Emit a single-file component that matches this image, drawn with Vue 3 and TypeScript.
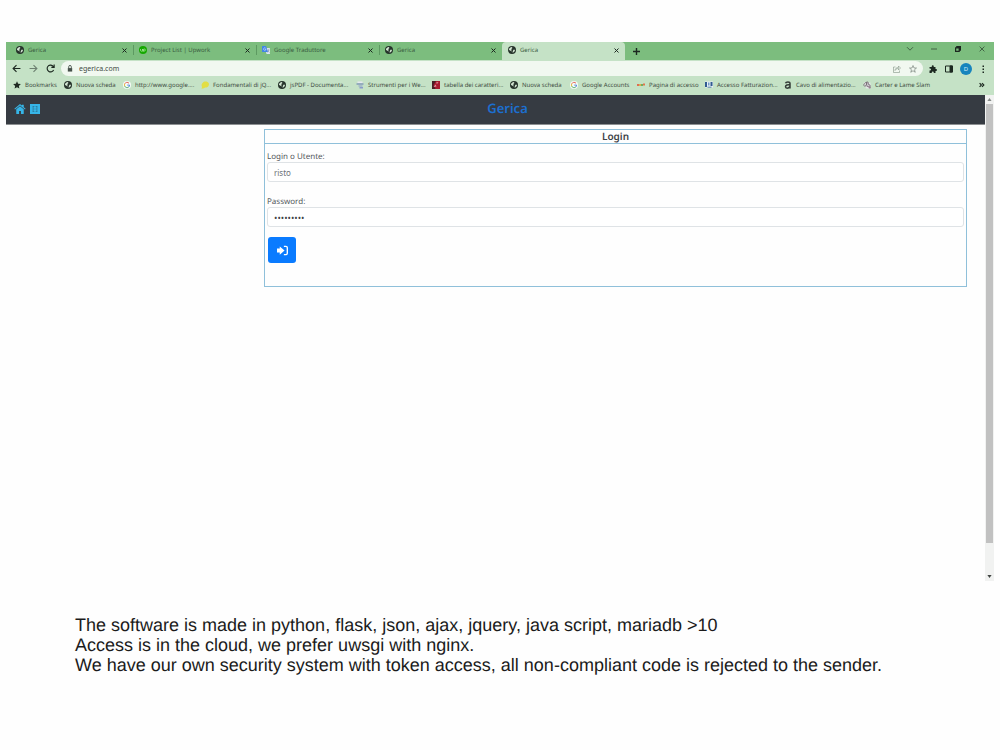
<script setup lang="ts">
import { ref } from 'vue'

interface Tab {
  title: string
  icon: string
  active?: boolean
}

interface Bookmark {
  title: string
  icon: string
}

const tabs: Tab[] = [
  { title: 'Gerica', icon: 'globe' },
  { title: 'Project List | Upwork', icon: 'upwork' },
  { title: 'Google Traduttore', icon: 'translate' },
  { title: 'Gerica', icon: 'globe' },
  { title: 'Gerica', icon: 'globe', active: true },
]

const bookmarks: Bookmark[] = [
  { title: 'Bookmarks', icon: 'star' },
  { title: 'Nuova scheda', icon: 'globe' },
  { title: 'http://www.google....', icon: 'google' },
  { title: 'Fondamentali di jQ...', icon: 'folder' },
  { title: 'jsPDF - Documenta...', icon: 'globe' },
  { title: 'Strumenti per i We...', icon: 'tools' },
  { title: 'tabella dei caratteri...', icon: 'table' },
  { title: 'Nuova scheda', icon: 'globe' },
  { title: 'Google Accounts', icon: 'google' },
  { title: 'Pagina di accesso', icon: 'dots' },
  { title: 'Accesso Fatturazion...', icon: 'invoice' },
  { title: 'Cavo di alimentazio...', icon: 'letter' },
  { title: 'Carter e Lame Slam', icon: 'parts' },
]

const address = ref('egerica.com')
const user = ref('risto')
const password = ref('gerica123')
</script>

<template>
  <svg class="sprite" aria-hidden="true">
    <symbol id="globe" viewBox="0 0 16 16">
      <circle cx="8" cy="8" r="8" fill="#26332b" />
      <path d="M2 6.500c1-2.500 3-4 5.500-4.300L9 4 7 5.500l.5 1.500-2 1L7.500 9.500 7 11 5 9.500 2.200 8zM10 8l2.500-1 1.500 1.500-1.500 3-3 2-.5-2 1.500-1.500z" fill="#d5e8d5" />
    </symbol>
    <symbol id="upwork" viewBox="0 0 16 16">
      <circle cx="8" cy="8" r="8" fill="#15a800" />
      <path d="M3 6v2.500a2 2 0 0 0 4 0V6c1 2.500 2 4 3.700 4a2 2 0 1 0-2-2L8 12" fill="none" stroke="#bdf0b4" stroke-width="1.300" />
    </symbol>
    <symbol id="translate" viewBox="0 0 16 16">
      <path d="M6 4h9a1 1 0 0 1 1 1v10a1 1 0 0 1-1 1H9z" fill="#dce5ee" />
      <path d="M1 0h7l4 12H1a1 1 0 0 1-1-1V1a1 1 0 0 1 1-1z" fill="#4285e8" />
      <path d="M7.500 4.500A2.500 2.500 0 1 0 8 7H6" fill="none" stroke="#dbe8fb" stroke-width="1.200" />
      <path d="M11 8h4M13 7v1c0 2-1 4-2 5M12 9c.5 2 1.500 3 3 4" fill="none" stroke="#7890a5" />
    </symbol>
    <symbol id="star" viewBox="0 0 16 16">
      <path d="M8 .5l2.300 5 5.400.6-4 3.700 1.100 5.400L8 12.500l-4.800 2.700 1.100-5.400-4-3.700 5.400-.6z" fill="#1f2a22" />
    </symbol>
    <symbol id="google" viewBox="0 0 16 16">
      <circle cx="8" cy="8" r="8" fill="#f5faf5" />
      <g fill="none" stroke-width="2">
        <path d="M12 4.500A5.200 5.200 0 0 0 3.500 5.500" stroke="#e46a5e" />
        <path d="M3.500 5.500a5.200 5.200 0 0 0 0 5" stroke="#e8bd42" />
        <path d="M3.500 10.500a5.200 5.200 0 0 0 8 1.500" stroke="#4aa866" />
        <path d="M11.500 12A5.200 5.200 0 0 0 13.200 8.200H8.500" stroke="#5689de" />
      </g>
    </symbol>
    <symbol id="folder" viewBox="0 0 16 16">
      <path d="M5 2c4-2 9-.5 10.500 2.500S15 12 11 13c-2 0-3 0-5 1.500L1 15.500 2 12C0 8 2 4 5 2z" fill="#e2de45" />
    </symbol>
    <symbol id="tools" viewBox="0 0 16 16">
      <path d="M3 1h10v3H3z" fill="#e6e8f0" />
      <path d="M1 5h14v2H1z" fill="#6579b5" />
      <path d="M5 9h8v2H5zM7 12h7v3H7z" fill="#8a9bc9" />
    </symbol>
    <symbol id="table" viewBox="0 0 16 16">
      <path d="M0 0h16v16H0z" fill="#a81c30" />
      <path d="M0 0h8L3 8l4 8H0z" fill="#4a2027" />
      <path d="M8 3l5-1-3 4zM3 12l4-5 2 4z" fill="#e29aa2" />
    </symbol>
    <symbol id="dots" viewBox="0 0 16 16">
      <path d="M0 6h4v4H0z" fill="#dc6e55" />
      <path d="M4 6h4v4H4z" fill="#ddb04c" />
      <path d="M8 6h4v4H8z" fill="#72ae60" />
      <path d="M12 5h4v4h-4z" fill="#e2744f" />
    </symbol>
    <symbol id="invoice" viewBox="0 0 16 16">
      <path d="M0 1h16v12H0z" fill="#e8eff5" />
      <path d="M0 2h4v10H0zM11 2h4v8h-4z" fill="#315b91" />
      <path d="M6 3h3v6H6z" fill="#6e9ac7" />
      <path d="M5 11h8v3H5z" fill="#83a4bd" />
    </symbol>
    <symbol id="letter" viewBox="0 0 16 16">
      <path d="M3 4.500C4 1 12 .5 12 5V15M12 7.500C7 7 3 8 3 11.500s6 4 9-.5" fill="none" stroke="#353c38" stroke-width="3" />
    </symbol>
    <symbol id="parts" viewBox="0 0 16 16">
      <path d="M1 3h14v12H6z" fill="#e3e6e6" />
      <path d="M1 8l4-5 3 2-4 6zM7 2h3l1 5 3 1v6l-3-4-3 1z" fill="none" stroke="#6a5967" stroke-width="1.500" />
      <path d="M10 11h5v4h-3z" fill="#987f91" />
    </symbol>
  </svg>

  <main class="slide">
    <section class="browser">
      <header class="tab-strip">
        <div v-for="(tab, i) in tabs" :key="i" class="tab" :class="{ active: tab.active }">
          <svg class="favicon"><use :href="'#' + tab.icon" /></svg>
          <span class="tab-title">{{ tab.title }}</span>
          <button class="plain close" type="button" aria-label="Close tab">
            <svg viewBox="0 0 10 10"><path d="M1 1l8 8M9 1L1 9" /></svg>
          </button>
        </div>
        <button class="plain new-tab" type="button" aria-label="New tab">
          <svg viewBox="0 0 10 10"><path d="M5 0v10M0 5h10" /></svg>
        </button>
        <div class="window-buttons">
          <button class="plain" type="button" aria-label="Search tabs">
            <svg viewBox="0 0 10 10"><path d="M0 2l5 5 5-5" /></svg>
          </button>
          <button class="plain" type="button" aria-label="Minimize">
            <svg viewBox="0 0 10 10"><path d="M0 5h10" /></svg>
          </button>
          <button class="plain bold" type="button" aria-label="Restore">
            <svg viewBox="0 0 10 10"><path d="M1 3h6v6H1zM3 3V1h6v6H7" /></svg>
          </button>
          <button class="plain" type="button" aria-label="Close window">
            <svg viewBox="0 0 10 10"><path d="M1 1l8 8M9 1L1 9" /></svg>
          </button>
        </div>
      </header>

      <nav class="toolbar" aria-label="Browser toolbar">
        <div class="history">
          <button class="plain nav-button" type="button" aria-label="Back">
            <svg viewBox="0 0 16 16"><path d="M15 8H2M8 2L2 8l6 6" /></svg>
          </button>
          <button class="plain nav-button forward" type="button" aria-label="Forward">
            <svg viewBox="0 0 16 16"><path d="M1 8h13M8 2l6 6-6 6" /></svg>
          </button>
          <button class="plain nav-button" type="button" aria-label="Reload">
            <svg viewBox="0 0 16 16"><path d="M13.500 10.500A6 6 0 1 1 12 3.500l2 2M14.500 1v5h-5" /></svg>
          </button>
        </div>
        <div class="address">
          <svg class="lock" viewBox="0 0 12 16">
            <path d="M1 7h10v8H1z" fill="#46504a" />
            <path d="M3 7V4a3 3 0 0 1 6 0v3" fill="none" stroke="#46504a" stroke-width="2" />
          </svg>
          <input v-model="address" type="text" aria-label="Address" />
          <button class="plain faded" type="button" aria-label="Share">
            <svg viewBox="0 0 16 16"><path d="M5 4H1v11h12v-4M4 11c0-4 3-6 7-6V2l4 4-4 4V7c-3 0-5 1-7 4z" /></svg>
          </button>
          <button class="plain outline" type="button" aria-label="Bookmark this page">
            <svg viewBox="0 0 16 16"><path d="M8 1l2 5h5l-4 3.500 1.500 5L8 11.500l-4.500 3 1.500-5L1 6h5z" /></svg>
          </button>
        </div>
        <div class="tools">
          <button class="plain" type="button" aria-label="Extensions">
            <svg viewBox="0 0 16 16"><path d="M1 4h4.500V2.500a2 2 0 0 1 4 0V4H13v4h1a2 2 0 0 1 0 4h-1v4H9.500v-1a2 2 0 0 0-4 0v1H1v-5h1a2 2 0 0 0 0-4H1z" fill="#1c2820" stroke="none" /></svg>
          </button>
          <button class="plain" type="button" aria-label="Side panel">
            <svg viewBox="0 0 16 16"><path d="M1 2h14v12H1z" /><path d="M10 2h5v12h-5z" fill="#1c2820" /></svg>
          </button>
          <button class="plain avatar" type="button" aria-label="Profile">D</button>
          <button class="plain" type="button" aria-label="Menu">
            <svg viewBox="0 0 16 16"><path d="M7 1h3v3H7zM7 7h3v3H7zM7 13h3v3H7z" fill="#1c2820" stroke="none" /></svg>
          </button>
        </div>
      </nav>

      <nav class="bookmarks" aria-label="Bookmarks">
        <a v-for="(mark, i) in bookmarks" :key="i" href="#">
          <svg class="favicon"><use :href="'#' + mark.icon" /></svg>
          <span>{{ mark.title }}</span>
        </a>
        <button class="plain more" type="button" aria-label="More bookmarks">
          <svg viewBox="0 0 10 10"><path d="M1 2l3 3-3 3M5 2l3 3-3 3" /></svg>
        </button>
      </nav>

      <div class="viewport">
        <div class="page">
          <header class="navbar">
            <div class="nav-icons">
              <a href="#" aria-label="Home">
                <svg class="home" viewBox="0 0 18 16">
                  <path d="M9 3.500l6 5V15a1 1 0 0 1-1 1h-3.500v-5h-3v5H4a1 1 0 0 1-1-1V8.500z" />
                  <path d="M9 0l3 2.500V1h3v4l3 2.500-1 1.300-8-6.500-8 6.500L0 7.500z" />
                </svg>
              </a>
              <a href="#" aria-label="Lists">
                <svg class="lists" viewBox="0 0 16 16">
                  <path d="M0 0h16v16H0z" />
                  <path d="M4 4h3M4 6h2M4 8h3M4 10h2M4 12h3M9 4h3M10 6h2M9 8h3M10 10h2M9 12h3" stroke="#28617a" />
                </svg>
              </a>
            </div>
            <h1>Gerica</h1>
          </header>

          <form class="card" @submit.prevent>
            <h2>Login</h2>
            <div class="fields">
              <label for="user">Login o Utente:</label>
              <input id="user" v-model="user" type="text" />
              <label for="password">Password:</label>
              <input id="password" v-model="password" type="password" />
              <button class="submit" type="submit" aria-label="Login">
                <svg viewBox="0 0 16 16">
                  <path d="M0 5h4V2l7 6-7 6v-3H0z" fill="#fff" />
                  <path d="M10 2h3a2 2 0 0 1 2 2v8a2 2 0 0 1-2 2h-3" fill="none" stroke="#fff" stroke-width="2" />
                </svg>
              </button>
            </div>
          </form>
        </div>

        <div class="scrollbar" aria-hidden="true">
          <svg viewBox="0 0 10 10"><path d="M2 7l3-4 3 4z" fill="#868a88" /></svg>
          <div class="thumb"></div>
          <svg viewBox="0 0 10 10"><path d="M2 3l3 4 3-4z" fill="#404442" /></svg>
        </div>
      </div>
    </section>

    <p class="caption">
      The software is made in python, flask, json, ajax, jquery, java script, mariadb &gt;10<br />
      Access is in the cloud, we prefer uwsgi with nginx.<br />
      We have our own security system with token access, all non-compliant code is rejected to the sender.
    </p>
  </main>
</template>

<style>
body {
  margin: 0;
  background: #fefefe;
}
</style>

<style scoped>
* {
  box-sizing: border-box;
}

svg {
  display: block;
  flex: none;
}

.sprite {
  position: absolute;
  width: 0;
  height: 0;
}

.slide {
  padding: 42px 6px 0;
  font-family: "Noto Sans", "Open Sans", sans-serif;
  text-rendering: geometricPrecision;
}

.plain {
  display: flex;
  align-items: center;
  justify-content: center;
  flex: none;
  padding: 0;
  border: 0;
  background: none;
  font: inherit;
}

.plain svg {
  width: 8px;
  height: 8px;
  fill: none;
  stroke: #1c2820;
  stroke-width: 2;
}

.plain.faded svg {
  stroke: #6d8071;
  stroke-width: 1;
}

.plain.outline svg {
  stroke: #4c5850;
  stroke-width: 1;
}

.favicon {
  width: 8px;
  height: 8px;
}

.tab-strip {
  display: flex;
  height: 18px;
  background: #7cbd7e;
  font-size: 6px;
  color: #3a5c40;
}

.tab {
  display: flex;
  align-items: center;
  flex: 0 1 123px;
  gap: 4px;
  padding: 0 2px 2px 10px;
  position: relative;
}

.tab:not(.active)::after {
  content: "";
  position: absolute;
  right: -5px;
  width: 1px;
  height: 10px;
  background: #5d9a61;
}

.tab:nth-child(4)::after {
  display: none;
}

.tab.active {
  flex-basis: 123px;
  margin: 0 4px;
  padding: 0 6px 2px;
  border-radius: 4px 4px 0 0;
  background: #c5e2c6;
}

.tab-title {
  flex: 1;
  white-space: nowrap;
}

.close svg {
  width: 5px;
  height: 5px;
}

.new-tab {
  width: 14px;
}

.new-tab svg {
  width: 7px;
  height: 7px;
}

.window-buttons {
  display: flex;
  gap: 16px;
  height: 14px;
  margin-left: auto;
  padding-right: 8px;
}

.window-buttons svg {
  width: 8px;
  height: 6px;
  stroke-width: 1;
}

.window-buttons .bold svg {
  stroke-width: 2;
}

.toolbar {
  display: flex;
  align-items: center;
  gap: 6px;
  height: 17px;
  padding: 0 7px 0 6px;
  background: #c5e2c6;
}

.history {
  display: flex;
  align-items: center;
  gap: 8px;
}

.nav-button svg {
  width: 9px;
  height: 9px;
}

.nav-button.forward svg {
  stroke: #6d8071;
}

.address {
  display: flex;
  align-items: center;
  flex: 1;
  gap: 8px;
  height: 15px;
  padding: 0 6px;
  border-radius: 8px;
  background: #f1f8f0;
}

.address .lock {
  width: 6px;
  height: 7px;
  margin-right: -2px;
}

.address input {
  flex: 1;
  min-width: 0;
  padding: 0;
  border: 0;
  outline: 0;
  background: none;
  font: 7px/14px "Noto Sans", sans-serif;
  color: #3f4a43;
}

.tools {
  display: flex;
  align-items: center;
  gap: 8px;
}

.tools .avatar {
  width: 12px;
  height: 12px;
  margin: 0 -1px;
  border-radius: 50%;
  background: #1784bd;
  color: #d9eefa;
  font-size: 6px;
}

.bookmarks {
  display: grid;
  grid-template-columns: 51px 59px 78px 77px 78px 76px 78px 60px 67px 68px 79px 79px 1fr 8px;
  align-items: center;
  height: 18px;
  padding: 0 8px 2px 7px;
  background: #c5e2c6;
}

.bookmarks a {
  display: flex;
  align-items: center;
  gap: 4px;
  color: #3d4b41;
  font-size: 6px;
  text-decoration: none;
  white-space: nowrap;
}

.more svg {
  width: 6px;
  height: 6px;
}

.viewport {
  display: flex;
  min-height: 486px;
}

.page {
  flex: 1;
  background: #fefefe;
}

.navbar {
  display: grid;
  grid-template-columns: 1fr auto 1fr;
  align-items: center;
  height: 30px;
  padding: 0 0 2px 8px;
  border-bottom: 1px solid #8d9092;
  background: #363b42;
}

.nav-icons {
  display: flex;
  align-items: center;
  gap: 4px;
}

.nav-icons svg {
  fill: #36b5e8;
}

.home {
  width: 12px;
  height: 10px;
}

.lists {
  width: 10px;
  height: 10px;
}

.navbar h1 {
  margin: 0;
  padding: 0 0 2px 16px;
  color: #1c6fd0;
  font: 600 13px/20px "Noto Sans", sans-serif;
}

.card {
  min-height: 158px;
  margin: 4px 18px 0 258px;
  border: 1px solid #8fc0da;
}

.card h2 {
  margin: 0;
  border-bottom: 1px solid #8fc0da;
  color: #3f4348;
  font: 600 10px/13px "Noto Sans", sans-serif;
  text-align: center;
}

.fields {
  padding: 8px 2px 0;
}

.fields label {
  display: block;
  color: #54585c;
  font-size: 8px;
  line-height: 10px;
}

.fields input {
  display: block;
  width: 100%;
  height: 20px;
  margin-bottom: 15px;
  padding: 0 6px;
  border: 1px solid #dfe3e6;
  border-radius: 3px;
  outline: 0;
  background: #fff;
  color: #6c7278;
  font: 8px/18px "Noto Sans", sans-serif;
}

.fields input[type="password"] {
  margin-bottom: 10px;
  color: #3f4448;
  font-size: 9px;
}

.submit {
  display: flex;
  align-items: center;
  justify-content: center;
  width: 28px;
  height: 26px;
  margin-left: 1px;
  padding: 0;
  border: 0;
  border-radius: 3px;
  background: #0a7bff;
}

.submit svg {
  width: 11px;
  height: 11px;
}

.scrollbar {
  display: flex;
  flex-direction: column;
  width: 9px;
  padding: 0 1px;
  background: #f1f2f1;
}

.scrollbar svg {
  width: 7px;
  height: 9px;
}

.thumb {
  flex: 1;
  margin-bottom: 29px;
  background: #c1c1c1;
}

.caption {
  margin: 34px 0 0;
  padding: 0 69px;
  color: #1b1b1b;
  font: 18px/20px "Liberation Sans", Arial, sans-serif;
}
</style>
